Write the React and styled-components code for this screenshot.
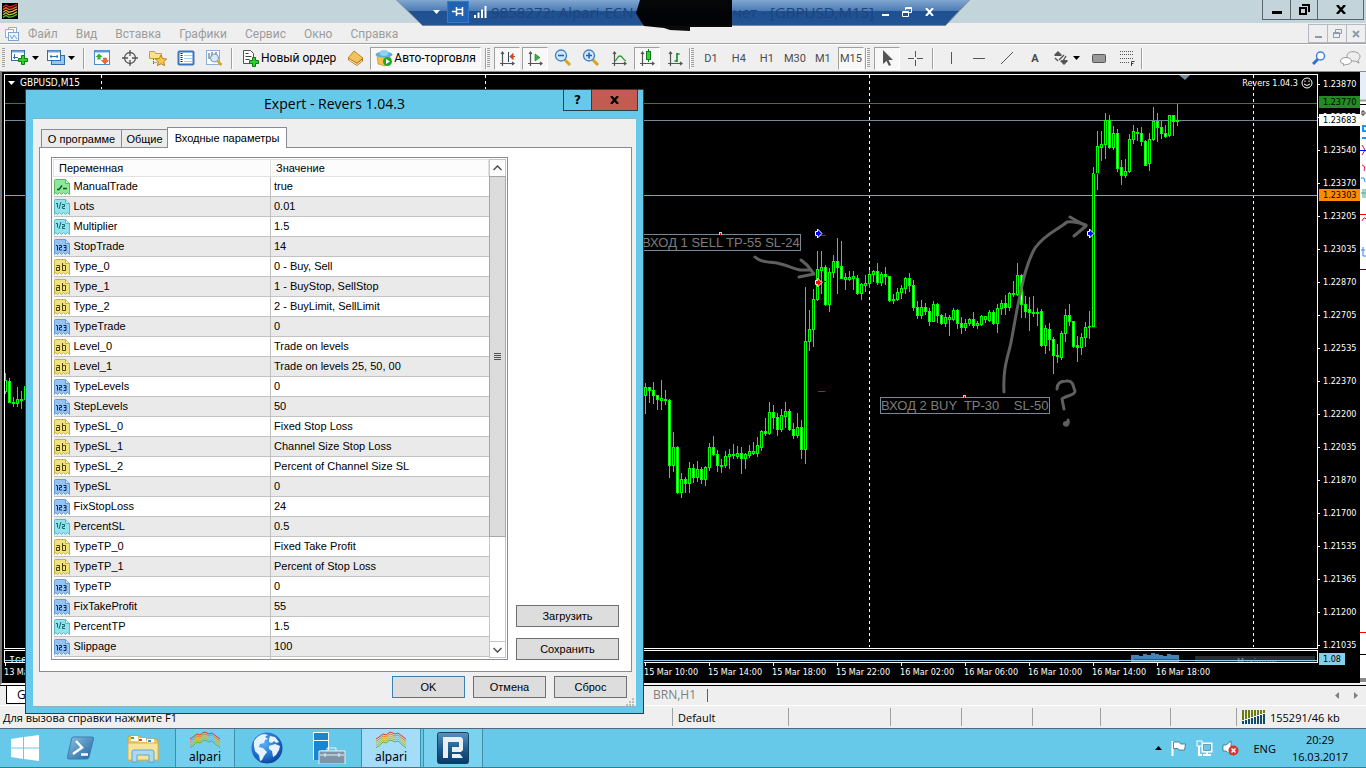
import React from 'react';
import styled, { createGlobalStyle, css } from 'styled-components';

const ui = '"Open Sans", "Noto Sans", sans-serif';
const barFont = 'Roboto, "Open Sans", sans-serif';
const classic = '"Liberation Sans", sans-serif';
const chartFont = '"DejaVu Sans Condensed", "DejaVu Sans", sans-serif';

const GlobalStyle = createGlobalStyle`
  * { box-sizing: border-box; }
  body { margin: 0; background: #efefef; font-family: ${ui}; font-size: 12px; color: #000; }
  button { font: inherit; color: inherit; background: none; border: 0; padding: 0; margin: 0; }
  svg { display: block; flex: none; }
`;

/* ---------- window frame ---------- */

const Desktop = styled.div`
  position: relative;
  display: flex;
  flex-direction: column;
  min-height: 100vh;
  overflow: hidden;
`;

const TitleBar = styled.header`
  display: flex;
  align-items: flex-start;
  justify-content: space-between;
  height: 23px;
  padding: 0 2px;
  background: #c3d5da;
`;

const AppLogo = styled.div`
  padding-top: 3px;
`;

const CaptionButtons = styled.div`
  display: flex;
  height: 20px;
  border: 1px solid #5b6469;
  border-top: 0;
`;

const CaptionButton = styled.button`
  display: flex;
  align-items: center;
  justify-content: center;
  width: ${(p) => (p.$wide ? 46 : 27)}px;
  & + & { border-left: 1px solid #5b6469; }
`;

const MenuBar = styled.nav`
  display: flex;
  align-items: center;
  height: 22px;
  padding-left: 5px;
  border-bottom: 1px solid #fff;
  box-shadow: inset 0 -1px 0 #a3a3a3;
  font-family: ${barFont};
`;

const MenuItem = styled.button`
  padding: 0 9px;
  line-height: 20px;
  color: #9c9c9c;
`;

const MdiButtons = styled.div`
  display: flex;
  margin-left: auto;
  height: 19px;
`;

const MdiButton = styled.button`
  display: flex;
  align-items: center;
  justify-content: center;
  width: 20px;
  border: 1px solid #b4bac0;
  & + & { margin-left: -1px; }
`;

const ConnectionBar = styled.div`
  position: absolute;
  top: 0;
  left: 50%;
  width: 576px;
  height: 27px;
  margin-left: -288px;
  z-index: 5;
  display: flex;
  align-items: center;
  padding: 0 31px 4px 30px;
  font-size: 15px;
  color: #1d447c;
`;

const ConnectionShape = styled.svg`
  position: absolute;
  inset: 0;
  z-index: -1;
`;

const ConnectionButton = styled.button`
  display: flex;
  align-items: center;
  justify-content: center;
  width: 22px;
  height: 22px;
  background: ${(p) => (p.$active ? '#2163ae' : 'none')};
  border: ${(p) => (p.$active ? '1px solid #2f7bd0' : '0')};
`;

const ConnectionTitle = styled.div`
  display: flex;
  flex: 1;
  justify-content: space-between;
  white-space: nowrap;
`;

const Redaction = styled.svg`
  position: absolute;
  left: 241px;
  top: 0;
`;

/* ---------- toolbar ---------- */

const Toolbar = styled.div`
  display: flex;
  align-items: center;
  height: 26px;
  white-space: nowrap;
  font-family: ${barFont};
`;

const Grip = styled.span`
  width: 3px;
  height: 20px;
  margin: 0 3px 0 ${(p) => (p.$first ? 2 : 0)}px;
  background: repeating-linear-gradient(#a2a2a2 0 1px, transparent 1px 2px);
`;

const Separator = styled.span`
  width: 2px;
  height: 21px;
  margin: 0 ${(p) => (p.$edge ? 0 : 3)}px;
  border-left: 1px solid #a0a0a0;
  border-right: 1px solid #fff;
`;

const pressed = css`
  border: 1px solid;
  border-color: #a0a0a0 #fff #fff #a0a0a0;
  background: #f8f8f8;
`;

const ToolButton = styled.button`
  display: flex;
  align-items: center;
  justify-content: center;
  width: 26px;
  height: 23px;
  margin: 0 1px;
  font-size: 11px;
  color: #4c4c4c;
  ${(p) => p.$pressed && pressed}
`;

const SplitButton = styled.button`
  display: flex;
  align-items: center;
  gap: 3px;
  width: 36px;
  height: 23px;
  padding-left: 3px;
`;

const TextToolButton = styled.button`
  display: flex;
  align-items: center;
  gap: 1px;
  height: 23px;
  padding: 0 ${(p) => (p.$pressed ? 4 : 6)}px;
  margin-right: ${(p) => (p.$pressed ? 4 : 0)}px;
  ${(p) => p.$pressed && pressed}
`;

const ToolbarEnd = styled.div`
  display: flex;
  margin-left: auto;
  gap: 14px;
  padding-right: 5px;
`;

/* ---------- chart window ---------- */

const ChartWindow = styled.main`
  display: grid;
  grid-template-columns: minmax(0, 1fr) 42px 6px;
  grid-template-rows: minmax(574px, 1fr) 14px 20px;
  flex: 1;
  padding: 2px 0 0 2px;
  background: #000;
  color: #fff;
  font-family: ${chartFont};
  font-size: 9px;
  border-top: 1px solid #8b8b8b;
  border-left: 2px solid #777;
  border-bottom: 2px solid #f4f4f4;
`;

const Plot = styled.section`
  position: relative;
  overflow: hidden;
  border: 1px solid #fff;
`;

const SubPlot = styled(Plot)`
  margin-top: 1px;
`;

const PlotHeader = styled.div`
  display: flex;
  align-items: center;
  justify-content: space-between;
  padding: 2px 4px 0 3px;
  line-height: 12px;
  position: relative;
`;

const PlotTitle = styled.div`
  display: flex;
  align-items: center;
  gap: 5px;
  font-size: 10px;
`;

const ExpertName = styled.div`
  display: flex;
  align-items: center;
  gap: 3px;
`;

const Fill = styled.svg`
  position: absolute;
  inset: 0;
  width: 100%;
  height: 100%;
`;

const PriceScale = styled.div`
  position: relative;
  display: flex;
  flex-direction: column;
  gap: 16px;
  padding-top: 2px;
  margin-bottom: ${(p) => (p.$main ? -10 : 0)}px;
`;

const PriceLabel = styled.div`
  display: flex;
  align-items: center;
  gap: 3px;
  line-height: 17px;
  &::before { content: ""; width: 2px; height: 1px; background: #fff; }
`;

const PriceTag = styled.div`
  position: absolute;
  left: 1px;
  top: ${(p) => p.$top}px;
  width: ${(p) => (p.$short ? 26 : 41)}px;
  padding-left: 4px;
  line-height: 12px;
  background: ${(p) => p.$color};
  color: #000;
`;

const TimeScale = styled.div`
  display: flex;
  grid-column: 1 / 3;
  overflow: hidden;
`;

const TimeLabel = styled.div`
  flex: 0 0 64px;
  line-height: 12px;
  white-space: nowrap;
  &::before { content: ""; display: block; width: 1px; height: 3px; margin-left: 1px; background: #fff; }
`;

const Behind = styled.div`
  grid-column: 3;
  grid-row: 1 / 4;
  margin-top: -2px;
  background: #fff;
`;

const ChartTabs = styled.div`
  display: flex;
  align-items: center;
  height: 21px;
  border-top: 1px solid #000;
  border-bottom: 1px solid #fff;
  padding-left: 6px;
  color: #808080;
`;

const ChartTab = styled.button`
  align-self: flex-start;
  line-height: 17px;
  ${(p) => p.$active
    ? css`
        width: 100px;
        margin-right: 535px;
        padding-left: 10px;
        text-align: left;
        color: #000;
        background: #fff;
        border: 1px solid #000;
        border-top: 0;
      `
    : css`
        padding: 0 12px;
        position: relative;
        &::after { content: ""; position: absolute; right: 0; top: 3px; height: 13px; border-right: 1px solid #606060; }
      `}
`;

const TabArrows = styled.div`
  display: flex;
  gap: 15px;
  margin-left: auto;
  padding-right: 8px;
`;

const StatusBar = styled.footer`
  display: flex;
  align-items: center;
  height: 22px;
  font-size: 11px;
`;

const StatusCell = styled.div`
  display: flex;
  align-items: center;
  gap: 4px;
  height: 18px;
  padding-left: ${(p) => (p.$width ? 5 : 3)}px;
  ${(p) => (p.$width ? css`width: ${p.$width}px; border-left: 1px solid #a0a0a0;` : 'flex: 1;')}
`;

/* ---------- taskbar ---------- */

const TaskBar = styled.div`
  display: flex;
  align-items: stretch;
  height: 40px;
  border-top: 1px solid #4d6b78;
  border-bottom: 1px solid #4a7686;
  background: #66c9ea;
`;

const StartButton = styled.button`
  width: 51px;
  padding-left: 11px;
`;

const TaskButton = styled.button`
  display: flex;
  align-items: center;
  justify-content: center;
  width: 60px;
  margin-right: 2px;
  border: ${(p) => (p.$tone ? '1px solid #3f8fab' : '0')};
  border-width: 0 1px;
  background: ${(p) => p.$tone || 'none'};
`;

const Alpari = styled.span`
  display: flex;
  flex-direction: column;
  align-items: center;
  font-family: "Noto Sans", sans-serif;
  font-size: 12px;
  line-height: 16px;
`;

const Tray = styled.div`
  display: flex;
  align-items: center;
  gap: 9px;
  margin-left: auto;
  padding-right: 18px;
`;

const Language = styled.button`
  margin: 0 7px 0 5px;
  font-size: 11px;
`;

const Clock = styled.div`
  font-size: 11px;
  line-height: 17px;
  text-align: center;
`;

/* ---------- dialog ---------- */

const Dialog = styled.section`
  position: absolute;
  left: 25px;
  top: 89px;
  width: 619px;
  height: 625px;
  z-index: 4;
  display: flex;
  flex-direction: column;
  padding: 0 7px 7px;
  border: 1px solid #23404d;
  background: #66c9ea;
  font-family: ${classic};
  font-size: 11px;
`;

const DialogTitle = styled.header`
  position: relative;
  height: 29px;
  text-align: center;
  font-family: ${ui};
  font-size: 14px;
  line-height: 28px;
`;

const DialogCaption = styled.div`
  position: absolute;
  top: 0;
  right: -2px;
  display: flex;
`;

const DialogCaptionButton = styled.button`
  display: flex;
  align-items: center;
  justify-content: center;
  width: ${(p) => (p.$close ? 47 : 29)}px;
  height: 21px;
  border: 1px solid #25414d;
  border-top: 0;
  background: ${(p) => (p.$close ? '#c25b50' : 'none')};
  font-family: "DejaVu Sans", sans-serif;
  font-weight: 700;
  font-size: 12px;
  line-height: 18px;
  & + & { margin-left: -1px; }
`;

const DialogBody = styled.div`
  display: flex;
  flex-direction: column;
  flex: 1;
  padding: 8px 4px 0 6px;
  background: #efefef;
  border: solid #8fb0bd;
  border-width: 1px 0;
`;

const Tabs = styled.div`
  display: flex;
  align-items: flex-end;
  padding-left: 2px;
  margin-bottom: -1px;
  position: relative;
`;

const Tab = styled.button`
  height: ${(p) => (p.$active ? 21 : 18)}px;
  width: ${(p) => p.$width}px;
  margin: 0 0 ${(p) => (p.$active ? 0 : 1)}px;
  text-align: center;
  white-space: nowrap;
  background: ${(p) => (p.$active ? '#fff' : '#ebebeb')};
  border: 1px solid #888b94;
  border-bottom: 0;
  & + & { margin-left: -1px; }
`;

const TabPanel = styled.div`
  display: flex;
  align-items: flex-end;
  gap: 8px;
  height: 525px;
  padding: 9px 12px 11px 11px;
  background: #fff;
  border: 1px solid #888b94;
`;

const ListFrame = styled.div`
  display: flex;
  flex: 1;
  height: 503px;
  border: 1px solid #888b94;
  padding: 1px;
  overflow: hidden;
`;

const ParamTable = styled.table`
  flex: 1;
  align-self: flex-start;
  border-collapse: collapse;
  table-layout: fixed;
  width: 437px;

  th {
    height: 17px;
    padding: 0 5px;
    text-align: left;
    font-weight: 400;
    line-height: 16px;
    background: #fcfcfc;
    border: 1px solid #e2e2e2;
  }
`;

const ParamRow = styled.tr`
  background: ${(p) => (p.$odd ? '#eaeaea' : '#fff')};

  td {
    height: 20px;
    padding: 0 0 0 3px;
    line-height: 19px;
    border-bottom: 1px solid #c2c2c2;
  }
  td:first-child { border-right: 1px solid #c2c2c2; padding-left: 0; }
`;

const ParamName = styled.span`
  display: flex;
  align-items: center;
  gap: 4px;
  height: 19px;
`;

const ScrollTrack = styled.div`
  display: flex;
  flex-direction: column;
  justify-content: space-between;
  width: 17px;
  border: solid #c4c4c4;
  border-width: 0 1px;
  background: #fff;
`;

const ScrollButton = styled.button`
  display: flex;
  align-items: center;
  justify-content: center;
  height: 17px;
  border: solid #c4c4c4;
  border-width: ${(p) => (p.$down ? '1px 0' : '1px 0 0')};
`;

const ScrollThumb = styled.div`
  display: flex;
  align-items: center;
  justify-content: center;
  height: 361px;
  margin: 0 -1px auto;
  border: 1px solid #a6a6a6;
  background: #dcdcdc;
`;

const SideButtons = styled.div`
  display: flex;
  flex-direction: column;
  gap: 11px;
`;

const PushButton = styled.button`
  width: ${(p) => (p.$wide ? 103 : 73)}px;
  height: 22px;
  background: #ddd;
  border: 1px solid ${(p) => (p.$default ? '#3c7fb1' : '#707070')};
`;

const DialogActions = styled.div`
  display: flex;
  justify-content: flex-end;
  gap: 8px;
  padding: 4px 5px 0 0;
`;

const SizeGrip = styled.svg`
  align-self: flex-end;
  margin: 0 -2px 0 0;
`;

/* ---------- data ---------- */

// high, body top, body bottom, low, falling
const leftCandles = [
  [373, 380, 391, 393, 0], [378, 381, 402, 402, 1], [397, 402, 403, 406, 0],
  [387, 399, 403, 406, 0], [391, 399, 400, 408, 0], [385, 386, 399, 400, 0],
];

const candles = [
  [383, 387, 395, 413, 0], [387, 387, 390, 402, 1], [382, 390, 395, 403, 1], [395, 395, 399, 409, 1],
  [380, 398, 400, 409, 0], [390, 399, 400, 404, 0], [399, 400, 465, 477, 1], [432, 447, 465, 471, 0],
  [446, 447, 492, 493, 1], [473, 479, 492, 497, 0], [477, 479, 483, 492, 1], [462, 468, 483, 492, 0],
  [464, 468, 477, 482, 1], [461, 469, 477, 481, 0], [467, 469, 479, 483, 1], [466, 467, 479, 485, 0],
  [443, 447, 467, 470, 0], [436, 447, 454, 455, 1], [450, 454, 465, 471, 1], [459, 465, 466, 472, 0],
  [451, 456, 465, 467, 0], [449, 454, 456, 468, 0], [444, 454, 455, 458, 0], [446, 453, 456, 458, 0],
  [447, 453, 458, 473, 1], [453, 454, 458, 468, 0], [445, 451, 455, 457, 0], [442, 451, 453, 454, 0],
  [437, 445, 453, 456, 0], [430, 431, 447, 450, 0], [418, 431, 433, 435, 1], [402, 412, 433, 434, 0],
  [405, 412, 417, 428, 1], [413, 417, 429, 435, 1], [409, 415, 429, 431, 0], [402, 411, 416, 427, 0],
  [409, 411, 429, 430, 1], [423, 429, 435, 438, 1], [413, 427, 435, 437, 0], [420, 427, 449, 458, 1],
  [287, 341, 449, 463, 0], [310, 329, 341, 350, 0], [289, 299, 329, 346, 0], [251, 269, 299, 300, 0],
  [251, 267, 270, 293, 0], [265, 267, 304, 305, 1], [268, 272, 304, 311, 0], [255, 261, 272, 277, 0],
  [238, 261, 267, 293, 1], [241, 266, 278, 278, 1], [273, 277, 279, 289, 0], [271, 277, 279, 280, 0],
  [271, 276, 278, 289, 0], [275, 278, 293, 294, 1], [283, 284, 293, 299, 0], [275, 283, 285, 291, 0],
  [270, 274, 283, 287, 0], [270, 271, 274, 281, 0], [263, 271, 282, 284, 1], [272, 274, 282, 285, 0],
  [267, 274, 276, 284, 1], [276, 276, 300, 301, 1], [294, 299, 300, 303, 0], [288, 292, 299, 300, 0],
  [285, 288, 292, 298, 0], [277, 278, 288, 293, 0], [273, 278, 285, 291, 1], [280, 285, 307, 310, 1],
  [301, 307, 315, 318, 1], [300, 307, 315, 318, 0], [303, 307, 311, 314, 1], [308, 311, 321, 325, 1],
  [301, 304, 321, 321, 0], [303, 304, 315, 322, 1], [314, 315, 323, 324, 1], [313, 317, 323, 326, 0],
  [315, 317, 319, 335, 0], [308, 310, 319, 320, 0], [309, 310, 323, 328, 1], [317, 323, 327, 333, 1],
  [319, 323, 327, 330, 0], [318, 319, 323, 325, 0], [312, 319, 325, 327, 1], [321, 323, 325, 328, 0],
  [315, 316, 324, 325, 0], [316, 316, 319, 322, 0], [310, 312, 320, 321, 0], [310, 312, 323, 324, 1],
  [304, 308, 323, 332, 0], [300, 303, 308, 314, 0], [295, 303, 307, 314, 1], [292, 293, 307, 310, 0],
  [281, 293, 294, 296, 0], [263, 275, 294, 295, 0], [274, 275, 304, 317, 1], [296, 304, 311, 317, 1],
  [297, 309, 312, 330, 1], [296, 312, 313, 316, 0], [308, 312, 313, 325, 0], [309, 311, 345, 346, 1],
  [325, 328, 345, 353, 0], [323, 329, 339, 350, 1], [337, 339, 355, 373, 1], [344, 355, 356, 362, 1],
  [331, 333, 357, 359, 0], [309, 315, 333, 341, 0], [304, 315, 321, 325, 1], [321, 321, 346, 347, 1],
  [336, 345, 347, 361, 1], [333, 337, 347, 354, 0], [322, 327, 337, 346, 0], [311, 326, 327, 338, 0],
  [167, 173, 326, 327, 0], [131, 146, 173, 189, 0], [131, 144, 147, 160, 0], [113, 120, 144, 158, 0],
  [115, 120, 147, 148, 1], [126, 133, 147, 149, 0], [129, 133, 168, 171, 1], [160, 167, 175, 184, 1],
  [159, 171, 175, 177, 0], [134, 139, 171, 172, 0], [125, 131, 139, 143, 0], [128, 132, 133, 140, 0],
  [127, 133, 141, 145, 1], [140, 141, 165, 165, 1], [133, 139, 163, 170, 0], [107, 121, 139, 140, 0],
  [113, 121, 127, 141, 1], [121, 127, 133, 138, 1], [125, 133, 136, 137, 1], [115, 115, 135, 136, 0],
  [115, 115, 121, 135, 1], [104, 120, 121, 125, 0],
];

const prices = [
  '1.23870', '1.23705', '1.23540', '1.23370', '1.23205', '1.23035', '1.22870', '1.22705', '1.22535',
  '1.22370', '1.22200', '1.22035', '1.21870', '1.21700', '1.21535', '1.21365', '1.21200', '1.21035',
];

const times = [
  '13 Mar', '', '', '', '', '', '', '', '', '', '15 Mar 10:00', '15 Mar 14:00', '15 Mar 18:00',
  '15 Mar 22:00', '16 Mar 02:00', '16 Mar 06:00', '16 Mar 10:00', '16 Mar 14:00', '16 Mar 18:00',
];

const params = [
  ['bool', 'ManualTrade', 'true'],
  ['real', 'Lots', '0.01'],
  ['real', 'Multiplier', '1.5'],
  ['int', 'StopTrade', '14'],
  ['text', 'Type_0', '0 - Buy, Sell'],
  ['text', 'Type_1', '1 - BuyStop, SellStop'],
  ['text', 'Type_2', '2 - BuyLimit, SellLimit'],
  ['int', 'TypeTrade', '0'],
  ['text', 'Level_0', 'Trade on levels'],
  ['text', 'Level_1', 'Trade on levels 25, 50, 00'],
  ['int', 'TypeLevels', '0'],
  ['int', 'StepLevels', '50'],
  ['text', 'TypeSL_0', 'Fixed Stop Loss'],
  ['text', 'TypeSL_1', 'Channel Size Stop Loss'],
  ['text', 'TypeSL_2', 'Percent of Channel Size SL'],
  ['int', 'TypeSL', '0'],
  ['int', 'FixStopLoss', '24'],
  ['real', 'PercentSL', '0.5'],
  ['text', 'TypeTP_0', 'Fixed Take Profit'],
  ['text', 'TypeTP_1', 'Percent of Stop Loss'],
  ['int', 'TypeTP', '0'],
  ['int', 'FixTakeProfit', '55'],
  ['real', 'PercentTP', '1.5'],
  ['int', 'Slippage', '100'],
  ['int', '', ''],
];

/* ---------- drawings ---------- */

const Candle = ({ x, data: [hi, top, bottom, lo, falling] }) => (
  <g shapeRendering="crispEdges">
    <rect x={x} y={hi} width="1" height={lo - hi + 1} fill="#0f0" />
    <rect x={x - 1} y={top} width="3" height={bottom - top + 1} fill="#0f0" />
    {bottom - top > 1 && (
      <rect x={x} y={top + 1} width="1" height={bottom - top - 1} fill={falling ? '#fff' : '#000'} />
    )}
  </g>
);

const EntryMark = ({ x, y, color }) => (
  <path
    d={`M${x - 2.5} ${y - 1.5}h2v-2.500l4.500 4.500l-4.500 4.500v-2.500h-2z`}
    fill={color}
    stroke="#fff"
    strokeWidth="1"
  />
);

const Note = styled.text`
  font-family: ${classic};
  font-size: 13px;
  fill: #7d7d7d;
  white-space: pre;
`;

const PriceChart = () => (
  <Fill>
    <g transform="translate(-5,-75)">
      <g shapeRendering="crispEdges">
        {[101, 485, 869, 1253].map((x) => (
          <line key={x} x1={x + 0.5} x2={x + 0.5} y1="75" y2="647" stroke="#fff" strokeDasharray="3 3" />
        ))}
        <rect x="5" y="103" width="100%" height="1" fill="#228b22" />
        <rect x="5" y="120" width="100%" height="1" fill="#778899" />
        <rect x="5" y="195" width="100%" height="1" fill="#ff8c00" />
      </g>
      {leftCandles.map((c, i) => <Candle key={i} x={5 + i * 4} data={c} />)}
      {candles.map((c, i) => <Candle key={i} x={645 + i * 4} data={c} />)}
      <path d="M1179 75h11l-5 5z" fill="#778899" />
      <g shapeRendering="crispEdges">
        <rect x="818" y="235" width="7" height="1" fill="#e00" />
        <rect x="818" y="391" width="7" height="1" fill="#e00" />
        <rect x="822" y="281" width="4" height="1" fill="#00f" />
        <rect x="1094" y="173" width="7" height="1" fill="#00f" />
        <rect x="1090" y="327" width="7" height="1" fill="#00f" />
      </g>
      <g fill="none" stroke="#778899">
        <rect x="600.5" y="234.5" width="200" height="16" />
        <rect x="880.5" y="397.5" width="169" height="16" />
      </g>
      <Note x="642" y="247">ВХОД 1 SELL TP-55 SL-24</Note>
      <Note x="881" y="410">{'ВХОД 2 BUY  TP-30    SL-50'}</Note>
      <g>
        <rect x="719" y="232" width="3" height="3" fill="#ccc" /><rect x="720" y="233" width="1" height="2" fill="#e00" />
        <rect x="963" y="395" width="3" height="3" fill="#ccc" /><rect x="964" y="396" width="1" height="2" fill="#e00" />
      </g>
      <EntryMark x={818} y={233} color="#00f" />
      <EntryMark x={818} y={282} color="#f00" />
      <EntryMark x={1090} y={233} color="#00f" />
      <g fill="none" stroke="#6a6a6a" strokeWidth="3" strokeLinecap="round" strokeLinejoin="round" opacity=".9">
        <path d="M755 257C760 262 768 262 777 263C786 265 792 268 800 270H811" />
        <path d="M801 260L807 265L814 274L799 277" />
        <path d="M1004 392C1003 372 1006 362 1010 347C1013 334 1015 318 1019 300C1023 280 1027 262 1035 248C1045 234 1056 231 1067 222C1074 221 1080 223 1086 225" />
        <path d="M1070 217L1086 226L1074 236" />
        <path d="M1057 389C1057 382 1062 381 1066 381C1074 380 1073 387 1075 391C1075 396 1064 396 1062 399L1064 409" />
        <path d="M1068 420C1069 424 1067 426 1065 425C1063 423 1066 422 1067 423" />
      </g>
    </g>
  </Fill>
);

const barHeights = [7, 7, 6, 8, 7, 9, 8, 7, 6, 8, 7, 7];

const Indicator = () => (
  <Fill>
    <g transform="translate(-5,-650)">
      <text x="9" y="662" fill="#fff" fontFamily="Liberation Mono, monospace" fontSize="10">IceF</text>
      {barHeights.map((h, i) => (
        <rect key={i} x={1131 + i * 4} y={661 - h} width="4" height={h} fill="#4682b4" />
      ))}
      <rect x="1134" y="658" width="44" height="1" fill="#f00" />
      <rect x="1195" y="655" width="120" height="6" fill="#2b2b2b" />
      <text x="1237" y="664" fill="#8a8a8a" fontSize="9">Maximum</text>
      <rect x="5" y="659" width="100%" height="1" fill="#87ceeb" />
    </g>
  </Fill>
);

const BehindWindow = () => (
  <svg width="6" height="611">
    <rect width="6" height="27" fill="#e8eef8" />
    <path d="M0 28.5h6" stroke="#9a9a9a" strokeWidth="2" />
    <path d="M0 32.5h6M0 582.5h6" stroke="#000" />
    <path d="M2 39v4h2v-4zM5 41h1" fill="none" stroke="#333" />
    <path d="M6 54H3v5h3M2 66h4" fill="none" stroke="#1e90ff" strokeWidth="2" />
    <path d="M2 73l3 5l-3 5M2 93q4 1 2 6M2 149q2-5 4-2" fill="none" stroke="#dc143c" />
    <path d="M0 78.5h6M0 197.5h6" stroke="#00f" />
    <path d="M1 106h3l1 4M3 175v9h3M1 178h4" fill="none" stroke="#1e90ff" />
    <path d="M3 117v9M5 117v9M1 121h5" stroke="#4a9" />
    <path d="M0 142.5h6M0 560.5h6" stroke="#f00" />
    <path d="M0 608h6" stroke="#8a8a8a" strokeWidth="4" />
  </svg>
);

const Caret = ({ color = '#000' }) => (
  <svg width="7" height="4"><path d="M0 0h7l-3.500 4z" fill={color} /></svg>
);

const Plus = ({ x, y }) => (
  <path transform={`translate(${x},${y})`} d="M3.500 .5h3v3h3v3h-3v3h-3v-3h-3v-3h3z" fill="#2fd02a" stroke="#0b7d12" />
);

const Axes = () => (
  <path d="M4.500 3v14M2 14.500h14M3 5l1.500-2L6 5M14 13l2 1.500l-2 1.500" fill="none" stroke="#555" strokeWidth="1.200" />
);

const icons = {
  newChart: (
    <>
      <rect x=".5" y="1.500" width="13" height="10" fill="#fff" stroke="#2f6fae" />
      <path d="M1 2.500h12" stroke="#6ea4dc" strokeWidth="2" />
      <path d="M3.500 5v5M2 8.500h5" stroke="#2f6fae" fill="none" />
      <Plus x={7} y={6} />
    </>
  ),
  profiles: (
    <>
      <rect x="4.500" y="6.500" width="13" height="9" fill="#9fc4ec" stroke="#2f6fae" />
      <rect x=".5" y="1.500" width="13" height="10" fill="#fff" stroke="#2f6fae" />
      <path d="M1 2.500h12" stroke="#6ea4dc" strokeWidth="2" />
      <path d="M3 7.500h8M4 6v3M10 6v3" stroke="#2f6fae" />
    </>
  ),
  market: (
    <>
      <rect x="1.500" y="1.500" width="15" height="14" fill="#fff" stroke="#4b8ad0" />
      <path d="M2 2.500h14" stroke="#5b9be0" strokeWidth="2" />
      <path d="M6 4.500l3.500 3.500H7.500v2.500h-3V8H2.500z" fill="#2fb52b" />
      <path d="M12 15l3.500-3.500h-2V9h-3v2.500h-2z" fill="#ef6a34" stroke="#c43c10" strokeWidth=".5" />
    </>
  ),
  crosshair: (
    <g fill="none" stroke="#555" strokeWidth="1.300">
      <circle cx="9" cy="9" r="5.500" /><path d="M9 1v6M9 11v6M1 9h6M11 9h6" />
    </g>
  ),
  favourites: (
    <>
      <path d="M.5 2.500h5l1 2h6v5H.5z" fill="#f8e38c" stroke="#c9a22b" />
      <path d="M4.500 10v6M4.500 13.500h4" stroke="#555" strokeDasharray="1 1" />
      <path d="M12 6l1.700 3.600l4 .4l-3 2.700l.9 4l-3.600-2l-3.600 2l.9-4l-3-2.700l4-.4z" fill="#fbc94a" stroke="#b9802a" />
    </>
  ),
  navigator: (
    <>
      <rect x="1.500" y="2.500" width="15" height="13" rx="1" fill="#fff" stroke="#3a76bd" strokeWidth="2" />
      <path d="M4.500 4v10" stroke="#222" strokeWidth="2" strokeDasharray="1 1" />
      <path d="M7 6.500h8M7 9.500h8M7 12.500h8" stroke="#a9cdf2" />
    </>
  ),
  tester: (
    <>
      <rect x="1.500" y="1.500" width="13" height="14" fill="#fff" stroke="#8ab0d8" />
      <path d="M4 10V4M7 8V3M11 6V3" stroke="#456" />
      <circle cx="9.500" cy="9" r="4" fill="#cfe6fa" fillOpacity=".8" stroke="#6f94b8" />
      <path d="M12.500 12l4 4" stroke="#d9a420" strokeWidth="2.500" />
    </>
  ),
  order: (
    <>
      <path d="M1.500 1.500h7l3 3v10h-10z" fill="#fff" stroke="#555" />
      <path d="M3.500 4.500h3M3.500 7.500h6M3.500 10.500h4" stroke="#444" />
      <Plus x={7} y={8} />
    </>
  ),
  book: (
    <>
      <path d="M1 9L7 2l9 7v3l-6 5l-9-6z" fill="#b47a1c" />
      <path d="M1 9L7 2l9 7l-6 5z" fill="#f2c35c" stroke="#b47a1c" strokeWidth=".7" />
      <path d="M2 10.500l8 5l5-4" stroke="#fff3cf" fill="none" />
    </>
  ),
  auto: (
    <>
      <path d="M2 6l1 9l7 2l5-5V6z" fill="#f0c24c" stroke="#b58a22" strokeWidth=".6" />
      <ellipse cx="9" cy="5.500" rx="8.500" ry="3" fill="#56b1dc" />
      <ellipse cx="9" cy="4" rx="4.500" ry="3" fill="#8fd2f0" />
      <circle cx="12.500" cy="12.500" r="4.500" fill="#1fa82a" />
      <path d="M11 10l4 2.500l-4 2.500z" fill="#fff" />
    </>
  ),
  shift: <><Axes /><path d="M10.500 3v10" stroke="#246" /><path d="M17 7.500h-4.500M15 4.500L12 7.500l3 3z" stroke="#c42" fill="#c42" /></>,
  scroll: <><Axes /><path d="M9 5l5 3.500L9 12z" fill="#35b63a" stroke="#177a20" strokeWidth=".6" /></>,
  zoomOut: (
    <>
      <path d="M10 10l6 6" stroke="#d8a51e" strokeWidth="3" />
      <circle cx="7" cy="6.500" r="5.500" fill="#cfe8fb" stroke="#3b7fc4" strokeWidth="1.300" />
      <path d="M4 6.500h6" stroke="#2563a8" strokeWidth="1.600" />
    </>
  ),
  zoomIn: (
    <>
      <path d="M10 10l6 6" stroke="#d8a51e" strokeWidth="3" />
      <circle cx="7" cy="6.500" r="5.500" fill="#cfe8fb" stroke="#3b7fc4" strokeWidth="1.300" />
      <path d="M4 6.500h6M7 3.500v6" stroke="#2563a8" strokeWidth="1.600" />
    </>
  ),
  line: <><Axes /><path d="M5 12C8 10 7 7 10 7s2 3 6 5" stroke="#2f9e38" fill="none" strokeWidth="1.300" /></>,
  candle: <><Axes /><path d="M10.500 0v13" stroke="#117a1d" /><rect x="8.500" y="2.500" width="4" height="8" fill="#2fd33a" stroke="#117a1d" /></>,
  bars: <><Axes /><path d="M11 4v9M8.500 12h2.500M11 5h2.500" stroke="#178a24" strokeWidth="1.600" /></>,
  cursor: <path d="M5 1v14l3.500-3l2.500 5l2-1l-2.500-5H15z" fill="#555" />,
  cross: <path d="M9.500 2v6M9.500 11v6M2 9.500h6M11 9.500h6" stroke="#555" />,
  vertical: <path d="M9.500 3v12" stroke="#555" />,
  horizontal: <path d="M3 9.500h12" stroke="#555" />,
  trend: <path d="M3 15L15 3" stroke="#555" />,
  objects: (
    <>
      <path d="M6 2l4 4l-1 1H3L2 6zM12 16l4-4l-1-1h-5l-2 1z" fill="#555" />
      <path d="M3 9l3 3M12 6L7 11M11 12l3-5" stroke="#555" strokeWidth="1.400" />
    </>
  ),
  box: <rect x="2.500" y="5.500" width="13" height="8" rx="1" fill="#999" stroke="#555" />,
  fib: (
    <>
      <path d="M2 2.500h14M2 5.500h14M2 9.500h14M2 13.500h9" stroke="#555" strokeDasharray="1 1" />
      <path d="M13.500 17v-4.500h3M13.500 14.500h2" stroke="#444" fill="none" />
    </>
  ),
};

const Icon = ({ name }) => <svg width="18" height="18" viewBox="0 0 18 18" aria-hidden="true">{icons[name]}</svg>;

const paramStyles = {
  bool: ['#8fe79a', '#58b868'],
  real: ['#93e2ee', '#5bb6c6'],
  int: ['#93c2f3', '#6a9cd2'],
  text: ['#efe27f', '#c2b052'],
};

const ParamIcon = ({ kind }) => {
  const [fill, stroke] = paramStyles[kind];
  return (
    <svg width="16" height="16" aria-hidden="true">
      <path d="M.5 1.500q0-1 1-1h10l4 4v11l-2-2l-2 2l-2-2l-2 2l-2-2l-2 2l-2-2l-1 2z" fill={fill} stroke={stroke} />
      <path d="M11.500 .5v4h4" fill="#fff" fillOpacity=".5" stroke={stroke} />
      <g fill="none" stroke="#17404f">
        {kind === 'bool' && <path d="M3 10.500h2l3-4M9 9.500h4" stroke="#0b5a1d" strokeWidth="1.400" />}
        {kind === 'int' && (
          <path stroke="#0d2c5c" d="M2 6.500h1.500v5M5 6.500h2.500v2H5.500v2.500H8M9.500 6.500H12v5H9.500M10 8.500h2" />
        )}
        {kind === 'real' && <path stroke="#166" d="M2 4.500h1.500v4M7 3l-2 7M8 5.500h2.500v2h-2v2H11" />}
        {kind === 'text' && (
          <path stroke="#4d4300" d="M2.500 6.500h3v5H2.500v-3h3M8.500 4v7.500h3v-5h-3" />
        )}
      </g>
    </svg>
  );
};

const Hills = () => (
  <svg width="32" height="18" viewBox="0 0 32 18">
    {['#d8402a', '#e8832c', '#e0b02c', '#b9b932', '#6fae3a'].map((c, i) => (
      <path
        key={c}
        d={`M1 ${8 + i * 2.2}L4 ${6 + i * 2.2}L8 ${3 + i * 2}L11 ${4 + i * 2}L15 ${1 + i * 2}L18 ${2 + i * 2}L20 ${3 + i * 2}L23 ${2 + i * 2}L27 ${5 + i * 2.2}L31 ${8 + i * 2.2}`}
        fill="none"
        stroke={c}
        strokeWidth="1"
      />
    ))}
  </svg>
);

const frames = ['D1', 'H4', 'H1', 'M30', 'M1', 'M15'];

export default function App() {
  return (
    <Desktop>
      <GlobalStyle />

      <TitleBar>
        <AppLogo>
          <svg width="16" height="16">
            <rect width="16" height="16" fill="#000" />
            {['#d22', '#e62', '#ea3', '#bc3', '#5b3'].map((c, i) => (
              <path key={c} d={`M1 ${4 + i * 2.6}l3-2l3 2l4-1l4-2`} fill="none" stroke={c} strokeWidth="1.300" />
            ))}
          </svg>
        </AppLogo>
        <CaptionButtons>
          <CaptionButton aria-label="Minimize"><svg width="10" height="10"><path d="M0 6h10v3H0z" /></svg></CaptionButton>
          <CaptionButton aria-label="Restore">
            <svg width="11" height="11"><path d="M3 0h8v8H9V2H3zM0 3h8v8H0zM2 5v4h4V5z" fillRule="evenodd" /></svg>
          </CaptionButton>
          <CaptionButton $wide aria-label="Close"><svg width="10" height="9"><path d="M1 0l8 9M9 0L1 9" stroke="#000" strokeWidth="2.400" /></svg></CaptionButton>
        </CaptionButtons>
      </TitleBar>

      <ConnectionBar>
        <ConnectionShape width="576" height="27">
          <defs>
            <linearGradient id="rdp" x1="0" y1="0" x2="0" y2="1">
              <stop offset="0" stopColor="#86abd4" />
              <stop offset=".45" stopColor="#4b7bb4" />
              <stop offset=".46" stopColor="#1f5090" />
              <stop offset="1" stopColor="#235394" />
            </linearGradient>
          </defs>
          <path d="M.5 -1L27.500 25.500H550.500L575.500 -1z" fill="url(#rdp)" stroke="#7e8894" />
        </ConnectionShape>
        <ConnectionButton aria-label="Menu"><Caret color="#fff" /></ConnectionButton>
        <ConnectionButton $active aria-label="Pin">
          <svg width="12" height="9"><path d="M0 4.500h4M4.500 0v9M4 2.500h6M4 6.500h6M10.500 0v9" stroke="#fff" strokeWidth="1.500" /></svg>
        </ConnectionButton>
        <ConnectionButton aria-label="Signal">
          <svg width="13" height="12"><path d="M1 12V9M4.500 12V6.500M8 12V3.500M11.500 12V0" stroke="#fff" strokeWidth="2" /></svg>
        </ConnectionButton>
        <ConnectionTitle><span>9858272: Alpari-ECN-</span><span>Счет - [GBPUSD,M15]</span></ConnectionTitle>
        <ConnectionButton aria-label="Minimize connection"><svg width="7" height="8"><path d="M0 6h7v2H0z" fill="#fff" /></svg></ConnectionButton>
        <ConnectionButton aria-label="Restore connection">
          <svg width="10" height="10"><path d="M3.500 3V.5h6v5H7M.5 4.500h6v5h-6zM.5 5.500h6M3.500 1.500h6" fill="none" stroke="#fff" /></svg>
        </ConnectionButton>
        <ConnectionButton aria-label="Close connection"><svg width="9" height="8"><path d="M1 0l7 8M8 0L1 8" stroke="#fff" strokeWidth="2" /></svg></ConnectionButton>
        <Redaction width="97" height="32"><path d="M4 0H96V27H54V31L34 30L28 28L8 26L4 20L0 13z" fill="#000" opacity=".96" /></Redaction>
      </ConnectionBar>

      <MenuBar>
        <svg width="14" height="14">
          <path d="M3.500 3V.500h8v6H10M.5 2.500h8v8h-8z" fill="#fff" stroke="#8ab0d8" />
          <rect x="3.500" y="5.500" width="10" height="8" fill="#eef5fc" stroke="#7ba6d3" />
          <path d="M5 8l2 4l2-4l3 4" fill="none" stroke="#7ba6d3" />
        </svg>
        {['Файл', 'Вид', 'Вставка', 'Графики', 'Сервис', 'Окно', 'Справка'].map((m) => <MenuItem key={m}>{m}</MenuItem>)}
        <MdiButtons>
          <MdiButton aria-label="Minimize chart"><svg width="7" height="8"><path d="M0 6h7v2H0z" fill="#8e9baa" /></svg></MdiButton>
          <MdiButton aria-label="Restore chart">
            <svg width="9" height="9"><path d="M2.500 3V.5h6v4H7M.5 3.500h6v5h-6zM.5 4.500h6" fill="none" stroke="#8e9baa" /></svg>
          </MdiButton>
          <MdiButton aria-label="Close chart"><svg width="8" height="8"><path d="M1 1l6 6M7 1L1 7" stroke="#8e9baa" strokeWidth="2" /></svg></MdiButton>
        </MdiButtons>
      </MenuBar>

      <Toolbar>
        <Grip $first />
        <SplitButton aria-label="New chart"><Icon name="newChart" /><Caret /></SplitButton>
        <SplitButton aria-label="Profiles"><Icon name="profiles" /><Caret /></SplitButton>
        <Separator />
        {['market', 'crosshair', 'favourites', 'navigator', 'tester'].map((n) => <ToolButton key={n} aria-label={n}><Icon name={n} /></ToolButton>)}
        <Separator />
        <TextToolButton><Icon name="order" />Новый ордер</TextToolButton>
        <ToolButton aria-label="MetaEditor"><Icon name="book" /></ToolButton>
        <TextToolButton $pressed><Icon name="auto" />Авто-торговля</TextToolButton>
        <Separator $edge /><Grip />
        <ToolButton $pressed aria-label="Chart shift"><Icon name="shift" /></ToolButton>
        <ToolButton $pressed aria-label="Auto scroll"><Icon name="scroll" /></ToolButton>
        <ToolButton aria-label="Zoom out"><Icon name="zoomOut" /></ToolButton>
        <ToolButton aria-label="Zoom in"><Icon name="zoomIn" /></ToolButton>
        <ToolButton aria-label="Line chart"><Icon name="line" /></ToolButton>
        <ToolButton $pressed aria-label="Candlesticks"><Icon name="candle" /></ToolButton>
        <ToolButton aria-label="Bar chart"><Icon name="bars" /></ToolButton>
        <Separator $edge /><Grip />
        {frames.map((f) => <ToolButton key={f} $pressed={f === 'M15'}>{f}</ToolButton>)}
        <Separator $edge /><Grip />
        <ToolButton $pressed aria-label="Cursor"><Icon name="cursor" /></ToolButton>
        <ToolButton aria-label="Crosshair"><Icon name="cross" /></ToolButton>
        <Separator />
        <ToolButton aria-label="Vertical line"><Icon name="vertical" /></ToolButton>
        <ToolButton aria-label="Horizontal line"><Icon name="horizontal" /></ToolButton>
        <ToolButton aria-label="Trendline"><Icon name="trend" /></ToolButton>
        <ToolButton><b>A</b></ToolButton>
        <SplitButton aria-label="Objects"><Icon name="objects" /><Caret /></SplitButton>
        <ToolButton aria-label="Rectangle"><Icon name="box" /></ToolButton>
        <ToolButton aria-label="Fibonacci"><Icon name="fib" /></ToolButton>
        <Separator $edge />
        <ToolbarEnd>
          <svg width="14" height="14">
            <path d="M1 13l5-5" stroke="#2f6fd0" strokeWidth="3" />
            <circle cx="8.500" cy="5" r="4" fill="#fff" stroke="#3f80dd" strokeWidth="1.500" />
          </svg>
          <svg width="21" height="15">
            <path d="M13 .7c4 0 7 2 7 4.500s-1 3-2 4l1 3l-3-2c-5 0-9-1-9-4.500S9 .7 13 .7z" fill="#eee" stroke="#999" />
            <path d="M6 6.500c3 0 5.500 1.500 5.500 3.500s-2 3.500-6 3.500l-2 1v-2c-2 0-3-1-3-2.500c0-2 2.500-3.500 5.500-3.500z" fill="#fff" stroke="#999" />
          </svg>
        </ToolbarEnd>
      </Toolbar>

      <ChartWindow>
        <Plot>
          <PriceChart />
          <PlotHeader>
            <PlotTitle><Caret color="#fff" />GBPUSD,M15</PlotTitle>
            <ExpertName>
              Revers 1.04.3
              <svg width="12" height="12">
                <circle cx="6" cy="6" r="5" fill="none" stroke="#fff" />
                <path d="M4 3.500v1.500M8 3.500v1.500M3 7q3 3 6 0" fill="none" stroke="#fff" />
              </svg>
            </ExpertName>
          </PlotHeader>
        </Plot>
        <PriceScale $main>
          {prices.map((p) => <PriceLabel key={p}>{p}</PriceLabel>)}
          <PriceTag $top={22} $color="#228b22">1.23770</PriceTag>
          <PriceTag $top={40} $color="#fff">1.23683</PriceTag>
          <PriceTag $top={115} $color="#ff8c00">1.23303</PriceTag>
        </PriceScale>
        <SubPlot><Indicator /></SubPlot>
        <PriceScale><PriceTag $short $top={4} $color="#87ceeb">1.08</PriceTag></PriceScale>
        <TimeScale>{times.map((t, i) => <TimeLabel key={i}>{t}</TimeLabel>)}</TimeScale>
        <Behind><BehindWindow /></Behind>
      </ChartWindow>

      <ChartTabs>
        <ChartTab $active>GBPUSD,M15</ChartTab>
        <ChartTab>BRN,H1</ChartTab>
        <TabArrows>
          <svg width="4" height="7"><path d="M4 0v7L0 3.500z" fill="#808080" /></svg>
          <svg width="4" height="7"><path d="M0 0v7l4-3.500z" fill="#808080" /></svg>
        </TabArrows>
      </ChartTabs>

      <StatusBar>
        <StatusCell>Для вызова справки нажмите F1</StatusCell>
        <StatusCell $width={116}>Default</StatusCell>
        <StatusCell $width={102} />
        <StatusCell $width={71} />
        <StatusCell $width={71} />
        <StatusCell $width={68} />
        <StatusCell $width={70} />
        <StatusCell $width={66} />
        <StatusCell $width={130}>
          <svg width="24" height="14">
            {[0, 1, 2, 3, 4, 5, 6, 7].map((i) => (
              <g key={i}>
                <rect x={i * 3} y="0" width="2" height={10 - i} fill="#6b7d10" />
                <rect x={i * 3} y={11 - i} width="2" height={3 + i} fill="#134a6b" />
              </g>
            ))}
          </svg>
          155291/46 kb
        </StatusCell>
      </StatusBar>

      <TaskBar>
        <StartButton aria-label="Start">
          <svg width="28" height="26"><path d="M0 4l12-2v10.500H0zM13 2l15-2v12.500H13zM0 13.500h12V24L0 22zM13 13.500h15V26l-15-2z" fill="#fff" /></svg>
        </StartButton>
        <TaskButton aria-label="PowerShell">
          <svg width="28" height="24">
            <defs><linearGradient id="ps" x1="0" y1="0" x2="1" y2="1"><stop offset="0" stopColor="#8cc0e2" /><stop offset="1" stopColor="#1f64a0" /></linearGradient></defs>
            <path d="M6 1h19q2 0 1.500 2L22 21q-.5 2-2 2H2q-2 0-1.500-2L4.500 3q.5-2 1.500-2z" fill="url(#ps)" stroke="#3c7cae" />
            <path d="M9 5l6 6.500l-9 6.500M14 18.500h7" fill="none" stroke="#fff" strokeWidth="2.400" />
          </svg>
        </TaskButton>
        <TaskButton aria-label="Explorer">
          <svg width="32" height="29">
            <path d="M1 4q0-2 2-2h10l2 3h14q2 0 2 2v19H1z" fill="#ecc968" stroke="#c9a040" />
            <path d="M4 2h7v5H4zM12 4h7v4h-7zM20 5h7v4h-7z" fill="#fff" />
            <path d="M4 3h3v2H4z" fill="#2bb24a" /><path d="M12 5h3v2h-3z" fill="#d9483b" /><path d="M21 6h3v2h-3z" fill="#3a84d8" />
            <path d="M1 9h30v17H1z" fill="#f8e39a" stroke="#d8b458" />
            <path d="M5 28V18q0-2 2-2h18q2 0 2 2v10h-5v-7H10v7z" fill="#a9daf2" stroke="#5da8d0" />
          </svg>
        </TaskButton>
        <TaskButton $tone="#74d0ee"><Alpari><Hills />alpari</Alpari></TaskButton>
        <TaskButton aria-label="Browser">
          <svg width="32" height="32">
            <defs><radialGradient id="earth" cx=".4" cy=".35" r=".7"><stop offset="0" stopColor="#5cb0f5" /><stop offset=".7" stopColor="#1a66c4" /><stop offset="1" stopColor="#0c3f8e" /></radialGradient></defs>
            <circle cx="16" cy="16" r="15.500" fill="url(#earth)" />
            <path d="M3 9q4-6 10-7l4 1l-3 2l3 2l-3 1l-1 3l-4 1l-1 3l4 1l4 4l-3 4l-2 4l-2 1l-1-6l-4-4l-1-5z" fill="#e4f3fd" />
            <path d="M19 4l5 1l4 5l-3 1l-2-2l-2 2l-3-1v-3zM18 14l6-2l5 2l-1 4l-3 5l-3 2l-1-6l-3-2z" fill="#e4f3fd" />
          </svg>
        </TaskButton>
        <TaskButton aria-label="Server Manager">
          <svg width="34" height="32">
            <path d="M1 1h16v17H9v10H1z" fill="#1a86d0" /><path d="M1.500 28V.5h15V18M1 8.500h15" fill="none" stroke="#fff" />
            <path d="M7 19h26v13H7z" fill="#7d95a6" stroke="#eaf2f6" /><path d="M15 19v-3h9v3M8 23h24M13 21v4M27 21v4" fill="none" stroke="#eaf2f6" />
          </svg>
        </TaskButton>
        <TaskButton $tone="#a5dcf7"><Alpari><Hills />alpari</Alpari></TaskButton>
        <TaskButton $tone="#7ad2ee" aria-label="Terminal">
          <svg width="32" height="32">
            <defs><linearGradient id="rp" x1="0" y1="0" x2="0" y2="1"><stop offset="0" stopColor="#5d93bb" /><stop offset=".5" stopColor="#1d5f93" /><stop offset="1" stopColor="#0a3965" /></linearGradient></defs>
            <rect x=".5" y=".5" width="31" height="31" rx="2" fill="url(#rp)" stroke="#14405f" />
            <path d="M6 5H24l2 2V18l-2 2H15V15h7V10H11V26H6zM15 22H23l3 4H15z" fill="#e8f0f5" />
          </svg>
        </TaskButton>
        <Tray>
          <svg width="7" height="4"><path d="M0 4h7L3.500 0z" /></svg>
          <svg width="16" height="16"><path d="M1.500 1v15" stroke="#fff" strokeWidth="2" /><path d="M2.500 2h6l1 2h5l-1 6H8L7 8.500H2.500z" fill="#fff" stroke="#3a6e84" strokeWidth=".8" /></svg>
          <svg width="17" height="16"><path d="M6.500 3.500h9v8h-9zM11 12v3M7 15h8M3 6v9h3" fill="none" stroke="#fff" strokeWidth="2" /><rect x="1" y="1" width="5" height="5" fill="#66c9ea" stroke="#fff" /><path d="M7.500 4.500h7v6h-7z" fill="none" stroke="#3a6e84" strokeWidth=".6" /></svg>
          <svg width="17" height="16"><path d="M1 5h3l5-4v14l-5-4H1z" fill="#fff" stroke="#3a6e84" strokeWidth=".8" /><circle cx="11.500" cy="10.500" r="5" fill="#d8352b" /><path d="M9.500 8.500l4 4M13.500 8.500l-4 4" stroke="#fff" strokeWidth="1.500" /></svg>
          <Language>ENG</Language>
          <Clock><div>20:29</div><div>16.03.2017</div></Clock>
        </Tray>
      </TaskBar>

      <Dialog role="dialog" aria-label="Expert - Revers 1.04.3">
        <DialogTitle>
          Expert - Revers 1.04.3
          <DialogCaption>
            <DialogCaptionButton>?</DialogCaptionButton>
            <DialogCaptionButton $close aria-label="Close"><svg width="9" height="8"><path d="M1 0l7 8M8 0L1 8" stroke="#000" strokeWidth="2.200" /></svg></DialogCaptionButton>
          </DialogCaption>
        </DialogTitle>
        <DialogBody>
          <Tabs role="tablist">
            <Tab role="tab" $width={81}>О программе</Tab>
            <Tab role="tab" $width={47}>Общие</Tab>
            <Tab role="tab" $width={120} $active>Входные параметры</Tab>
          </Tabs>
          <TabPanel>
            <ListFrame>
              <ParamTable>
                <colgroup><col width="217" /><col /></colgroup>
                <thead><tr><th>Переменная</th><th>Значение</th></tr></thead>
                <tbody>
                  {params.map(([kind, name, value], i) => (
                    <ParamRow key={i} $odd={i % 2 === 1}>
                      <td><ParamName><ParamIcon kind={kind} />{name}</ParamName></td>
                      <td>{value}</td>
                    </ParamRow>
                  ))}
                </tbody>
              </ParamTable>
              <ScrollTrack>
                <ScrollButton aria-label="Scroll up"><svg width="9" height="6"><path d="M.5 5l4-4l4 4" fill="none" stroke="#505050" strokeWidth="1.500" /></svg></ScrollButton>
                <ScrollThumb><svg width="7" height="8"><path d="M0 .5h7M0 2.500h7M0 4.500h7M0 6.500h7" stroke="#505050" /></svg></ScrollThumb>
                <ScrollButton $down aria-label="Scroll down"><svg width="9" height="6"><path d="M.5 1l4 4l4-4" fill="none" stroke="#505050" strokeWidth="1.500" /></svg></ScrollButton>
              </ScrollTrack>
            </ListFrame>
            <SideButtons>
              <PushButton $wide>Загрузить</PushButton>
              <PushButton $wide>Сохранить</PushButton>
            </SideButtons>
          </TabPanel>
          <DialogActions>
            <PushButton $default>OK</PushButton>
            <PushButton>Отмена</PushButton>
            <PushButton>Сброс</PushButton>
          </DialogActions>
          <SizeGrip width="8" height="8">
            <path d="M6 0h2v2H6zM3 3h2v2H3zM6 3h2v2H6zM0 6h2v2H0zM3 6h2v2H3zM6 6h2v2H6z" fill="#bcbcbc" />
          </SizeGrip>
        </DialogBody>
      </Dialog>
    </Desktop>
  );
}
